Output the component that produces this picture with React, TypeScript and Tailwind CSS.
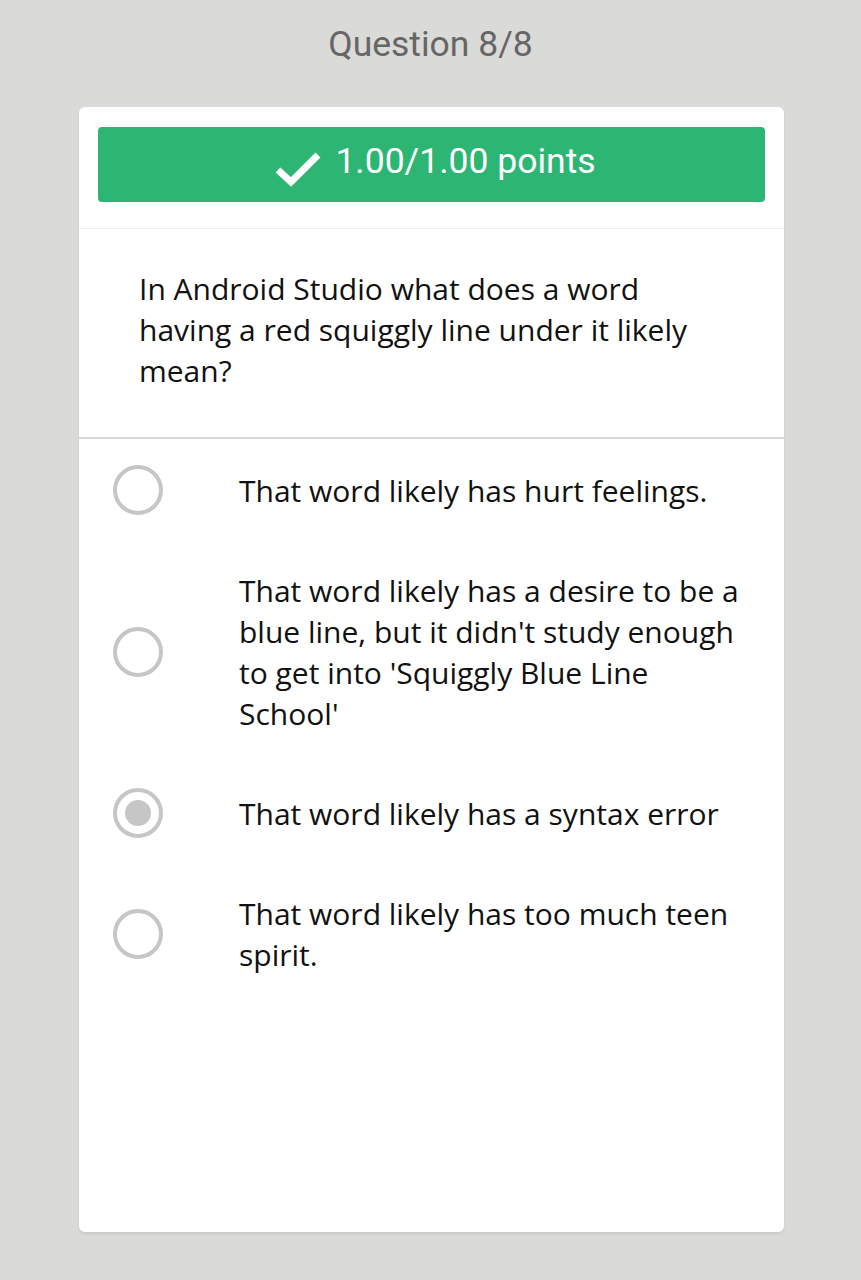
import { FC } from 'react';

type Option = {
    id: number;
    text: string;
    selected?: boolean;
};

const options: Option[] = [
    { id: 1, text: 'That word likely has hurt feelings.' },
    { id: 2, text: "That word likely has a desire to be a blue line, but it didn't study enough to get into 'Squiggly Blue Line School'" },
    { id: 3, text: 'That word likely has a syntax error', selected: true },
    { id: 4, text: 'That word likely has too much teen spirit.' },
];

const Radio: FC<{ checked?: boolean }> = ({ checked }) => (
    <div className="w-[50px] h-[50px] rounded-full border-[4px] border-[#c6c6c6] flex items-center justify-center shrink-0">
        {checked && <div className="w-[26px] h-[26px] rounded-full bg-[#c6c6c6]" />}
    </div>
);

const App: FC = () => {
    return (
        <main className="min-h-screen bg-[#dadad8] pb-[48px]">
            <h1 className="text-center text-[35.5px] text-[#666666] pt-[18px] h-[107px] font-['Roboto',sans-serif]">
                Question 8/8
            </h1>
            <div className="ml-[79px] mr-[77px] bg-white rounded-[6px] shadow-[0_2px_3px_rgba(0,0,0,0.08)] h-[1125px] flex flex-col">
                <div className="px-[19px] pt-[20px] pb-[26px]">
                    <div className="h-[75px] bg-[#2db673] rounded-[4px] flex items-center justify-center gap-[14px] pl-[8px] text-white font-['Roboto',sans-serif] text-[35.5px]">
                        <svg width="46" height="36" viewBox="0 0 46 36" className="mt-[8px]">
                            <path d="M3 19 L16 31 L43 4" fill="none" stroke="white" strokeWidth="7" />
                        </svg>
                        <span className="-mt-[6px]">1.00/1.00 points</span>
                    </div>
                </div>
                <div className="border-t border-[#ececec] border-b-2 border-b-[#d8d8d8] h-[211px] flex items-center pl-[60px] pr-[40px]">
                    <p className="text-[30px] leading-[41px] text-[#111111] font-['Open_Sans',sans-serif] max-w-[560px] -mt-[8px]">
                        In Android Studio what does a word having a red squiggly line under it likely mean?
                    </p>
                </div>
                <div className="flex flex-col gap-[50px] pt-[26px] pl-[34px] pr-[30px]">
                    {options.map(option => (
                        <div key={option.id} className="flex items-center">
                            <Radio checked={option.selected} />
                            <p className="ml-[76px] py-[4.5px] text-[30px] leading-[41px] text-[#111111] font-['Open_Sans',sans-serif] max-w-[515px]">
                                {option.text}
                            </p>
                        </div>
                    ))}
                </div>
            </div>
        </main>
    );
};

export default App;
